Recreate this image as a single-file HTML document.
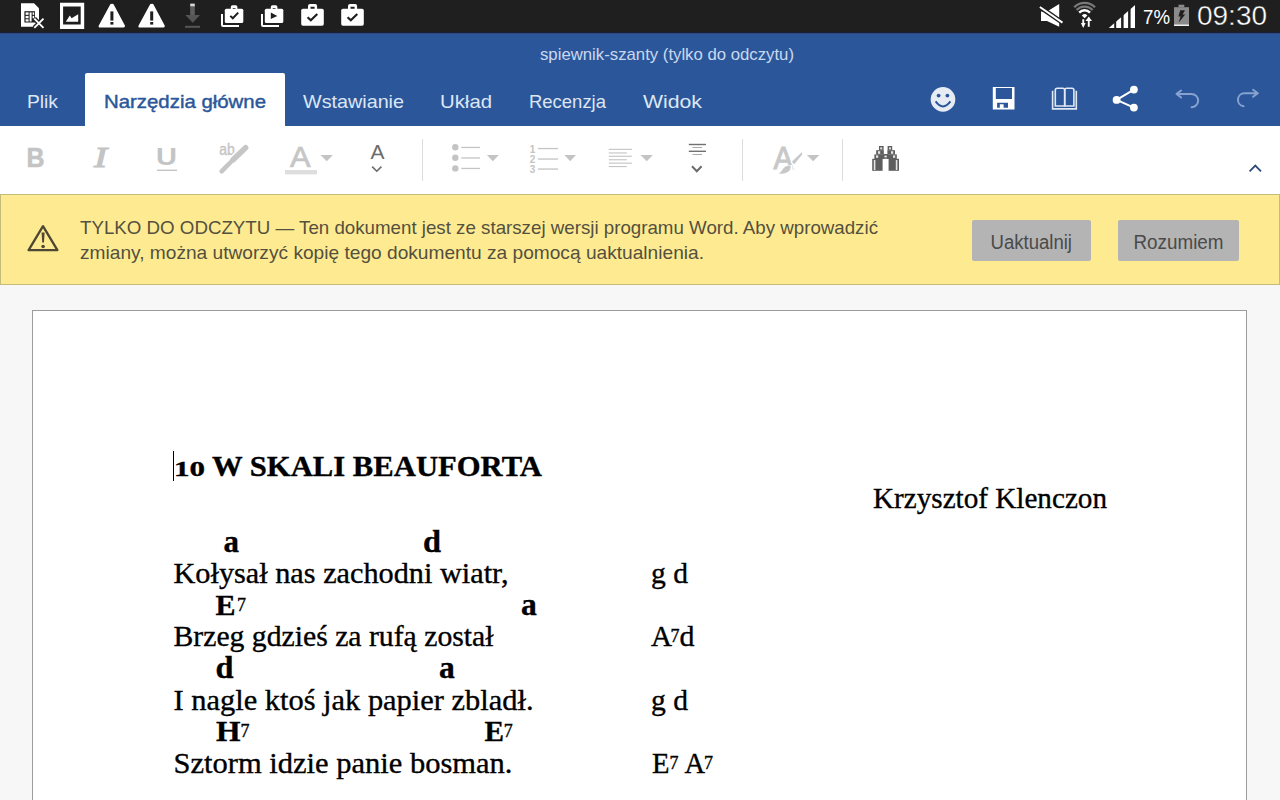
<!DOCTYPE html>
<html><head><meta charset="utf-8">
<style>
html,body{margin:0;padding:0;width:1280px;height:800px;overflow:hidden;background:#f7f7f7;}
svg{display:block;}
.sans{font-family:"Liberation Sans",sans-serif;}
.serif{font-family:"Liberation Serif",serif;}
</style></head>
<body>
<svg width="1280" height="800" viewBox="0 0 1280 800">
<!-- backgrounds -->
<rect x="0" y="0" width="1280" height="800" fill="#f7f7f7"/>
<rect x="0" y="0" width="1280" height="33" fill="#1f1f1f"/>
<rect x="0" y="32" width="1280" height="1" fill="#15213a"/>
<rect x="0" y="33" width="1280" height="93" fill="#2b579a"/>
<rect x="0" y="33" width="1280" height="1" fill="#30487a"/>
<rect x="0" y="126" width="1280" height="68" fill="#ffffff"/>
<rect x="0.5" y="194.5" width="1279" height="90" fill="#feeb91" stroke="#c4bc78" stroke-width="1"/>

<!-- STATUS BAR -->
<g id="status">
<!-- SIM -->
<path d="M21 3.2 H34 L39 8.2 V26.8 H21 Z" fill="#ffffff"/>
<rect x="24.4" y="11.2" width="10.6" height="11.3" fill="#1f1f1f"/>
<rect x="25.6" y="12.4" width="3" height="2.4" fill="#fff"/>
<rect x="25.6" y="15.9" width="3" height="2.4" fill="#fff"/>
<rect x="25.6" y="19.3" width="3" height="2.2" fill="#fff"/>
<rect x="29.6" y="12.4" width="2" height="9.1" fill="#fff"/>
<rect x="32.6" y="12.4" width="1.6" height="2.4" fill="#fff"/>
<rect x="32.6" y="15.9" width="1.6" height="2.4" fill="#fff"/>
<path d="M34.3 18.6 L43.5 27.8 M43.5 18.6 L34.3 27.8" stroke="#1f1f1f" stroke-width="4.5"/>
<path d="M34.3 18.6 L43.5 27.8 M43.5 18.6 L34.3 27.8" stroke="#ffffff" stroke-width="1.9"/>
<!-- image -->
<path d="M60 2.8 H84.2 V29 H60 Z M63.1 6.6 V24.4 H80.7 V6.6 Z" fill="#ffffff" fill-rule="evenodd"/>
<path d="M65.8 21.8 L69.8 15.6 L71.6 18.2 L78.2 14.2 V21.8 Z" fill="#ffffff"/>
<!-- warnings -->
<path d="M112 4 Q112.9 3.2 113.7 4.4 L124.9 25.6 Q125.5 27.6 123.5 27.6 H100 Q98 27.6 98.8 25.6 L110.2 4.4 Q111 3.2 112 4 Z" fill="#ffffff"/>
<rect x="110.4" y="11.4" width="3" height="9.2" fill="#1f1f1f"/>
<rect x="110.4" y="22" width="3" height="2.6" fill="#1f1f1f"/>
<path d="M151.8 4 Q152.7 3.2 153.5 4.4 L164.7 25.6 Q165.3 27.6 163.3 27.6 H139.8 Q137.8 27.6 138.6 25.6 L150 4.4 Q150.8 3.2 151.8 4 Z" fill="#ffffff"/>
<rect x="150.2" y="11.4" width="3" height="9.2" fill="#1f1f1f"/>
<rect x="150.2" y="22" width="3" height="2.6" fill="#1f1f1f"/>
<!-- download -->
<rect x="190.2" y="3.6" width="4.6" height="3" fill="#d8d8d8"/>
<rect x="190.2" y="6.6" width="4.6" height="8.6" fill="#5e5e5e"/>
<path d="M185.4 15 H200 L192.7 22.8 Z" fill="#555555"/>
<rect x="185" y="25.8" width="15" height="2" fill="#555555"/>
<!-- briefcase stacks -->
<g id="bc1">
<rect x="224.8" y="8.7" width="18.5" height="14.4" rx="1.6" fill="#fff"/>
<path d="M230.8 9 V7 Q230.8 5.2 232.6 5.2 H235.6 Q237.4 5.2 237.4 7 V9 Z M232.7 9 V7.9 H235.5 V9 Z" fill="#fff" fill-rule="evenodd"/>
<path d="M222 13.9 V25 Q222 26 223 26 H239" fill="none" stroke="#fff" stroke-width="2"/>
<path d="M230.3 15.9 L232.8 18.3 L238.2 12.6" fill="none" stroke="#1f1f1f" stroke-width="2"/>
</g>
<g transform="translate(40,0)">
<rect x="224.8" y="8.7" width="18.5" height="14.4" rx="1.6" fill="#fff"/>
<path d="M230.8 9 V7 Q230.8 5.2 232.6 5.2 H235.6 Q237.4 5.2 237.4 7 V9 Z M232.7 9 V7.9 H235.5 V9 Z" fill="#fff" fill-rule="evenodd"/>
<path d="M222 13.9 V25 Q222 26 223 26 H239" fill="none" stroke="#fff" stroke-width="2"/>
<path d="M230.8 12.6 V19.1 L237.3 15.9 Z" fill="#1f1f1f"/>
</g>
<g id="bc3">
<rect x="301.2" y="8.8" width="22.6" height="17" rx="1.8" fill="#fff"/>
<path d="M308 9.2 V6.1 Q308 4.1 310 4.1 H315.1 Q317.1 4.1 317.1 6.1 V9.2 Z M310.5 9.2 V6.8 H314.6 V9.2 Z" fill="#fff" fill-rule="evenodd"/>
<path d="M307.6 17.2 L310.8 20.2 L317.3 14" fill="none" stroke="#1f1f1f" stroke-width="2.2"/>
</g>
<g transform="translate(40,0)">
<rect x="301.2" y="8.8" width="22.6" height="17" rx="1.8" fill="#fff"/>
<path d="M308 9.2 V6.1 Q308 4.1 310 4.1 H315.1 Q317.1 4.1 317.1 6.1 V9.2 Z M310.5 9.2 V6.8 H314.6 V9.2 Z" fill="#fff" fill-rule="evenodd"/>
<path d="M307.6 17.2 L310.8 20.2 L317.3 14" fill="none" stroke="#1f1f1f" stroke-width="2.2"/>
</g>
<!-- mute -->
<path d="M1041 11.5 H1047 L1059.2 4.1 V26.7 L1047 20.9 H1041 Z" fill="#fff"/>
<path d="M1039.9 7 L1062.5 22.6" stroke="#1f1f1f" stroke-width="4.6"/>
<path d="M1039.9 7 L1062.5 22.6" stroke="#fff" stroke-width="2"/>
<!-- wifi -->
<g fill="none" stroke-width="2.3">
<path d="M1074.2 7.2 A14.5 14.5 0 0 1 1095 7.2" stroke="#7a7a7a"/>
<path d="M1076.6 10 A11 11 0 0 1 1092.6 10" stroke="#7a7a7a"/>
<path d="M1079.2 12.6 A7.4 7.4 0 0 1 1090 12.6" stroke="#fff"/>
</g>
<path d="M1081.8 15.4 A4 4 0 0 1 1087.4 15.4 L1084.6 18.2 Z" fill="#fff"/>
<path d="M1082.3 19.3 H1084.2 V23 H1085.6 L1083.25 27.9 L1080.9 23 H1082.3 Z" fill="#fff"/>
<path d="M1087.8 26.7 H1089.7 V21 H1092 L1088.75 16.4 L1085.5 21 H1087.8 Z" fill="#fff"/>
<!-- signal -->
<clipPath id="sigclip"><path d="M1108.8 27.9 H1135.1 V4.9 Z"/></clipPath>
<g clip-path="url(#sigclip)" fill="#fff">
<rect x="1108.8" y="4" width="5.4" height="24"/>
<rect x="1116.2" y="4" width="4.9" height="24"/>
<rect x="1123.6" y="4" width="4.5" height="24"/>
<rect x="1130.6" y="4" width="4.5" height="24"/>
</g>
<text class="sans" x="1143" y="24" font-size="21" fill="#fff" textLength="27" lengthAdjust="spacingAndGlyphs">7%</text>
<!-- battery -->
<rect x="1178.5" y="4.7" width="5.8" height="2.6" fill="#8a8a8a"/>
<rect x="1174" y="7.2" width="15" height="18.6" fill="#8a8a8a"/>
<rect x="1174" y="24.6" width="15" height="1.3" fill="#ffffff"/>
<path d="M1180.2 10.2 H1185 L1182.6 14.6 H1185.2 L1178.6 22.8 L1180.6 16.4 H1178.4 Z" fill="#1f1f1f"/>
<text class="sans" x="1197" y="25.2" font-size="28" fill="#fff" stroke="#1f1f1f" stroke-width="0.4" textLength="70" lengthAdjust="spacingAndGlyphs">09:30</text>
</g>

<!-- BLUE BAR -->
<g id="ribbon">
<text class="sans" x="540" y="60" font-size="17" fill="#cad7ef" textLength="254" lengthAdjust="spacingAndGlyphs">spiewnik-szanty (tylko do odczytu)</text>
<path d="M85 126 V75 Q85 73 87 73 H283 Q285 73 285 75 V126 Z" fill="#ffffff"/>
<text class="sans" x="27" y="108" font-size="19" fill="#dde6f4" textLength="31" lengthAdjust="spacingAndGlyphs">Plik</text>
<text class="sans" x="104" y="108" font-size="19" fill="#2b579a" stroke="#2b579a" stroke-width="0.45" textLength="162" lengthAdjust="spacingAndGlyphs">Narzędzia główne</text>
<text class="sans" x="303" y="108" font-size="19" fill="#dde6f4" textLength="101" lengthAdjust="spacingAndGlyphs">Wstawianie</text>
<text class="sans" x="440" y="108" font-size="19" fill="#dde6f4" textLength="52" lengthAdjust="spacingAndGlyphs">Układ</text>
<text class="sans" x="529" y="108" font-size="19" fill="#dde6f4" textLength="77" lengthAdjust="spacingAndGlyphs">Recenzja</text>
<text class="sans" x="643" y="108" font-size="19" fill="#dde6f4" textLength="59" lengthAdjust="spacingAndGlyphs">Widok</text>
</g>


<!-- ribbon right icons -->
<circle cx="943" cy="99.4" r="12.3" fill="#e6ebf4"/>
<circle cx="938.6" cy="95.6" r="1.9" fill="#2b579a"/>
<circle cx="947.4" cy="95.6" r="1.9" fill="#2b579a"/>
<path d="M935.6 101.4 Q943 111.5 950.4 101.4" fill="none" stroke="#2b579a" stroke-width="2"/>
<path d="M992.8 86.9 H1014.5 V109.5 H992.8 Z M995.8 87.9 V99.1 H1012 V87.9 Z M997.1 102.7 V107.7 H999.8 V104.2 H1003.6 V107.7 H1008 V102.7 Z" fill="#ffffff" fill-rule="evenodd"/>
<g fill="none" stroke="#e2e9f5" stroke-width="1.6">
<path d="M1055.3 106 V90 Q1055.3 88.2 1057.3 88.2 H1062.6 Q1064.7 88.2 1064.7 90 V106 Z"/>
<path d="M1064.7 106 V90 Q1064.7 88.2 1066.7 88.2 H1071.9 Q1073.9 88.2 1073.9 90 V106 Z"/>
<path d="M1052.6 90.8 V108.9 H1076.3 V90.8"/>
</g>
<path d="M1133.9 89.6 L1116.6 99.9 L1133.9 107.6" fill="none" stroke="#ffffff" stroke-width="2"/>
<circle cx="1133.9" cy="89.6" r="3.9" fill="#ffffff"/>
<circle cx="1116.6" cy="99.9" r="3.9" fill="#ffffff"/>
<circle cx="1133.9" cy="107.6" r="3.9" fill="#ffffff"/>
<g fill="none" stroke="#87a2d0" stroke-width="2" stroke-linecap="round" stroke-linejoin="round">
<path d="M1181.1 90.5 L1176.6 93.9 L1181.1 97.6 M1176.6 93.9 H1191.5 A6.65 6.65 0 0 1 1191.5 107.2"/>
<path d="M1253.1 89.8 L1257.8 93.3 L1253.1 96.8 M1257.8 93.3 H1243.8 A6.5 6.5 0 0 0 1243.5 106.2"/>
</g>

<!-- TOOLBAR -->
<g id="toolbar">
<text class="sans" x="26.5" y="167.3" font-size="27.5" font-weight="bold" fill="#c4c4c4" stroke="#c4c4c4" stroke-width="0.6" textLength="18" lengthAdjust="spacingAndGlyphs">B</text>
<text class="serif" x="94" y="167.3" font-size="30" font-style="italic" fill="#c4c4c4" stroke="#c4c4c4" stroke-width="1.1" textLength="13" lengthAdjust="spacingAndGlyphs">I</text>
<text class="sans" x="156" y="164.5" font-size="23.5" font-weight="bold" fill="#c4c4c4" textLength="21" lengthAdjust="spacingAndGlyphs">U</text>
<rect x="157" y="169.6" width="20" height="1.4" fill="#c4c4c4"/>
<text class="sans" x="219.3" y="155.2" font-size="16.5" fill="#c4c4c4" stroke="#c4c4c4" stroke-width="0.35" textLength="15.5" lengthAdjust="spacingAndGlyphs">ab</text>
<path d="M245.8 147.6 L231 162" stroke="#ffffff" stroke-width="9" stroke-linecap="round"/>
<path d="M245.6 147.8 L233.2 159.6" stroke="#c6c6c6" stroke-width="5.6" stroke-linecap="round"/>
<path d="M231.6 161.2 L226.5 166.4 L222.6 170.4 L221.6 171.4" stroke="#c6c6c6" stroke-width="4.4" stroke-linecap="round" stroke-linejoin="round" fill="none"/>
<path d="M226 166.5 L222 170.6" stroke="#c6c6c6" stroke-width="3" stroke-linecap="round"/>
<text class="sans" x="290" y="167.3" font-size="29" fill="#c6c6c6" stroke="#c6c6c6" stroke-width="0.7" textLength="20.5" lengthAdjust="spacingAndGlyphs">A</text>
<rect x="285" y="170" width="32" height="4.4" fill="#dedede"/>
<path d="M320.6 155 H332.9 L326.75 161.3 Z" fill="#c4c4c4"/>
<text class="sans" x="370.4" y="159.4" font-size="21" fill="#6b6b6b" textLength="14" lengthAdjust="spacingAndGlyphs">A</text>
<path d="M372.2 166.6 L376.8 171.2 L381.4 166.6" fill="none" stroke="#6b6b6b" stroke-width="1.6"/>
<rect x="422" y="139" width="1" height="42" fill="#dcdcdc"/>
<rect x="742" y="139" width="1" height="42" fill="#dcdcdc"/>
<rect x="842" y="139" width="1" height="42" fill="#dcdcdc"/>
<g fill="#c4c4c4">
<circle cx="455.3" cy="147.3" r="3.2"/><circle cx="455.3" cy="157.8" r="3.2"/><circle cx="455.3" cy="168.4" r="3.2"/>
<rect x="461.3" y="146.8" width="18.7" height="1.3"/><rect x="461.3" y="157.3" width="18.7" height="1.3"/><rect x="461.3" y="167.8" width="18.7" height="1.3"/>
<path d="M486.9 155 H498.8 L492.85 161.3 Z"/>
<rect x="538" y="147.9" width="20" height="1.3"/><rect x="538" y="158.4" width="20" height="1.3"/><rect x="538" y="168.4" width="20" height="1.3"/>
<path d="M564.4 155 H576 L570.2 161.3 Z"/>
<rect x="608.8" y="148.8" width="23.1" height="1.1"/>
<rect x="608.8" y="152.4" width="18" height="1.1"/>
<rect x="608.8" y="155.7" width="23.1" height="1.1"/>
<rect x="608.8" y="159.2" width="18" height="1.1"/>
<rect x="608.8" y="162.6" width="23.1" height="1.1"/>
<rect x="608.8" y="166" width="18" height="1.1"/>
<path d="M640.6 155 H652.9 L646.75 161.3 Z"/>
<path d="M806.9 155 H819.4 L813.15 161.3 Z"/>
</g>
<g class="sans" font-size="10" font-weight="bold" fill="#c4c4c4">
<text x="529.8" y="152.5">1</text><text x="529.8" y="163">2</text><text x="529.8" y="173">3</text>
</g>
<rect x="688.8" y="143.8" width="17.2" height="1.4" fill="#707070"/>
<rect x="688.8" y="150.6" width="17.2" height="1.4" fill="#707070"/>
<rect x="692.5" y="147" width="9.5" height="1" fill="#a8a8a8"/>
<rect x="692.5" y="154" width="9.5" height="1" fill="#a8a8a8"/>
<path d="M692 166.3 L696.8 171.2 L701.6 166.3" fill="none" stroke="#6b6b6b" stroke-width="2"/>
<!-- styles -->
<text class="sans" x="773.6" y="168.8" font-size="32" fill="#c8c8c8" stroke="#c8c8c8" stroke-width="1" textLength="19.5" lengthAdjust="spacingAndGlyphs">A</text>
<path d="M803 151.5 L790.5 162.2 L795 166.5 L803.5 155 Z" fill="#ffffff"/>
<path d="M792 165 Q784 164.5 781.5 169 Q780 172 777.5 174.5 L790.5 175 Q794 170 792 165 Z" fill="#ffffff"/>
<path d="M801.8 152.2 L791.8 161.8 L794.2 164.2 L802.3 154.4 Z" fill="#c8c8c8"/>
<path d="M790.6 165.6 Q785 165.4 782.6 169.4 Q781.2 172 778.7 173.6 Q786.6 174.3 789.6 170.6 Q791.2 168.4 790.6 165.6 Z" fill="#c8c8c8"/>
<!-- binoculars -->
<g fill="#5e5e5e">
<rect x="872.2" y="158.8" width="10.4" height="12.0"/>
<rect x="888.6" y="158.8" width="10.4" height="12.0"/>
<rect x="874.4" y="154.4" width="9.6" height="4.6"/>
<rect x="887.2" y="154.4" width="9.6" height="4.6"/>
<rect x="876.2" y="150.2" width="7.6" height="4.4"/>
<rect x="887.4" y="150.2" width="7.6" height="4.4"/>
<rect x="879.0" y="146.0" width="4.6" height="4.4"/>
<rect x="887.6" y="146.0" width="4.6" height="4.4"/>
<rect x="883" y="154" width="5.2" height="4.8"/>
</g><g fill="#e4e4e4">
<rect x="880.2" y="147.4" width="2.0" height="2.0"/>
<rect x="889.0" y="147.4" width="2.0" height="2.0"/>
<rect x="878.0" y="151.2" width="2.2" height="2.6"/>
<rect x="891.0" y="151.2" width="2.2" height="2.6"/>
<rect x="876.0" y="155.4" width="2.2" height="2.4"/>
<rect x="893.0" y="155.4" width="2.2" height="2.4"/>
<rect x="873.8" y="160.0" width="1.6" height="10.0"/>
<rect x="895.8" y="160.0" width="1.6" height="10.0"/>
<rect x="884.4" y="155.6" width="2.4" height="1.8"/>
</g>
<path d="M1249.6 171.3 L1255.3 165.6 L1261 171.3" fill="none" stroke="#2f4a78" stroke-width="1.8"/>
</g>

<!-- BANNER -->
<g id="banner">
<path d="M43 226.2 L28.6 250.2 H57.4 Z" fill="none" stroke="#4d4734" stroke-width="2.3" stroke-linejoin="round"/>
<path d="M41.6 232.6 H44.6 L44 242.6 H42.2 Z" fill="#4d4734"/>
<circle cx="43.1" cy="246.5" r="1.8" fill="#4d4734"/>

<text class="sans" x="80" y="234" font-size="19" fill="#54503f" textLength="798" lengthAdjust="spacingAndGlyphs">TYLKO DO ODCZYTU — Ten dokument jest ze starszej wersji programu Word. Aby wprowadzić</text>
<text class="sans" x="80" y="259" font-size="19" fill="#54503f" textLength="624" lengthAdjust="spacingAndGlyphs">zmiany, można utworzyć kopię tego dokumentu za pomocą uaktualnienia.</text>
<rect x="972" y="220" width="119" height="41" rx="2" fill="#b4b4b4"/>
<rect x="1118" y="220" width="121" height="41" rx="2" fill="#b4b4b4"/>
<text class="sans" x="990.5" y="249" font-size="19.5" fill="#4a4a4a" textLength="81.5" lengthAdjust="spacingAndGlyphs">Uaktualnij</text>
<text class="sans" x="1133.5" y="249" font-size="19.5" fill="#4a4a4a" textLength="90" lengthAdjust="spacingAndGlyphs">Rozumiem</text>
</g>

<!-- PAGE -->
<rect x="32.5" y="310.5" width="1214" height="600" fill="#ffffff" stroke="#9c9c9c" stroke-width="1"/>
<g id="doc" class="serif" fill="#000000" stroke="#000000" stroke-width="0.35">
<rect x="173" y="451" width="1" height="30" fill="#000" stroke="none"/>
<text x="174" y="476" font-size="22" font-weight="bold" textLength="31" lengthAdjust="spacingAndGlyphs">10</text>
<text x="212" y="476" font-size="30" font-weight="bold" textLength="330" lengthAdjust="spacingAndGlyphs">W SKALI BEAUFORTA</text>
<text x="873" y="508" font-size="29" textLength="234" lengthAdjust="spacingAndGlyphs">Krzysztof Klenczon</text>

<text x="223.5" y="552.2" font-size="32" font-weight="bold" textLength="15.5" lengthAdjust="spacingAndGlyphs">a</text>
<text x="423" y="552.2" font-size="32" font-weight="bold" textLength="18" lengthAdjust="spacingAndGlyphs">d</text>
<text x="173.5" y="583" font-size="29" textLength="335" lengthAdjust="spacingAndGlyphs">Kołysał nas zachodni wiatr,</text>
<text x="651" y="583" font-size="29" textLength="37" lengthAdjust="spacingAndGlyphs">g d</text>

<text x="215.5" y="614.8" font-size="29" font-weight="bold" textLength="20" lengthAdjust="spacingAndGlyphs">E</text>
<text x="237" y="611" font-size="18">7</text>
<text x="521" y="615" font-size="32" font-weight="bold" textLength="15.8" lengthAdjust="spacingAndGlyphs">a</text>
<text x="173.5" y="646" font-size="29" textLength="320" lengthAdjust="spacingAndGlyphs">Brzeg gdzieś za rufą został</text>
<text x="651" y="646" font-size="29" textLength="21" lengthAdjust="spacingAndGlyphs">A</text>
<text x="670.5" y="642" font-size="18">7</text>
<text x="679.5" y="646" font-size="29" textLength="15" lengthAdjust="spacingAndGlyphs">d</text>

<text x="215.5" y="677.5" font-size="32" font-weight="bold" textLength="18" lengthAdjust="spacingAndGlyphs">d</text>
<text x="439" y="677.5" font-size="32" font-weight="bold" textLength="15.8" lengthAdjust="spacingAndGlyphs">a</text>
<text x="173.5" y="709.8" font-size="29" textLength="360" lengthAdjust="spacingAndGlyphs">I nagle ktoś jak papier zbladł.</text>
<text x="651" y="709.8" font-size="29" textLength="37" lengthAdjust="spacingAndGlyphs">g d</text>

<text x="216" y="740.8" font-size="29" font-weight="bold" textLength="24.5" lengthAdjust="spacingAndGlyphs">H</text>
<text x="240.5" y="737" font-size="18">7</text>
<text x="484.5" y="740.8" font-size="29" font-weight="bold" textLength="19.5" lengthAdjust="spacingAndGlyphs">E</text>
<text x="503.8" y="737" font-size="18">7</text>
<text x="173.5" y="772.5" font-size="29" textLength="339" lengthAdjust="spacingAndGlyphs">Sztorm idzie panie bosman.</text>
<text x="652" y="772.5" font-size="29" textLength="17.5" lengthAdjust="spacingAndGlyphs">E</text>
<text x="669.5" y="769" font-size="18">7</text>
<text x="684.5" y="772.5" font-size="29" textLength="20.5" lengthAdjust="spacingAndGlyphs">A</text>
<text x="704" y="769" font-size="18">7</text>
</g>
</svg>
</body></html>
